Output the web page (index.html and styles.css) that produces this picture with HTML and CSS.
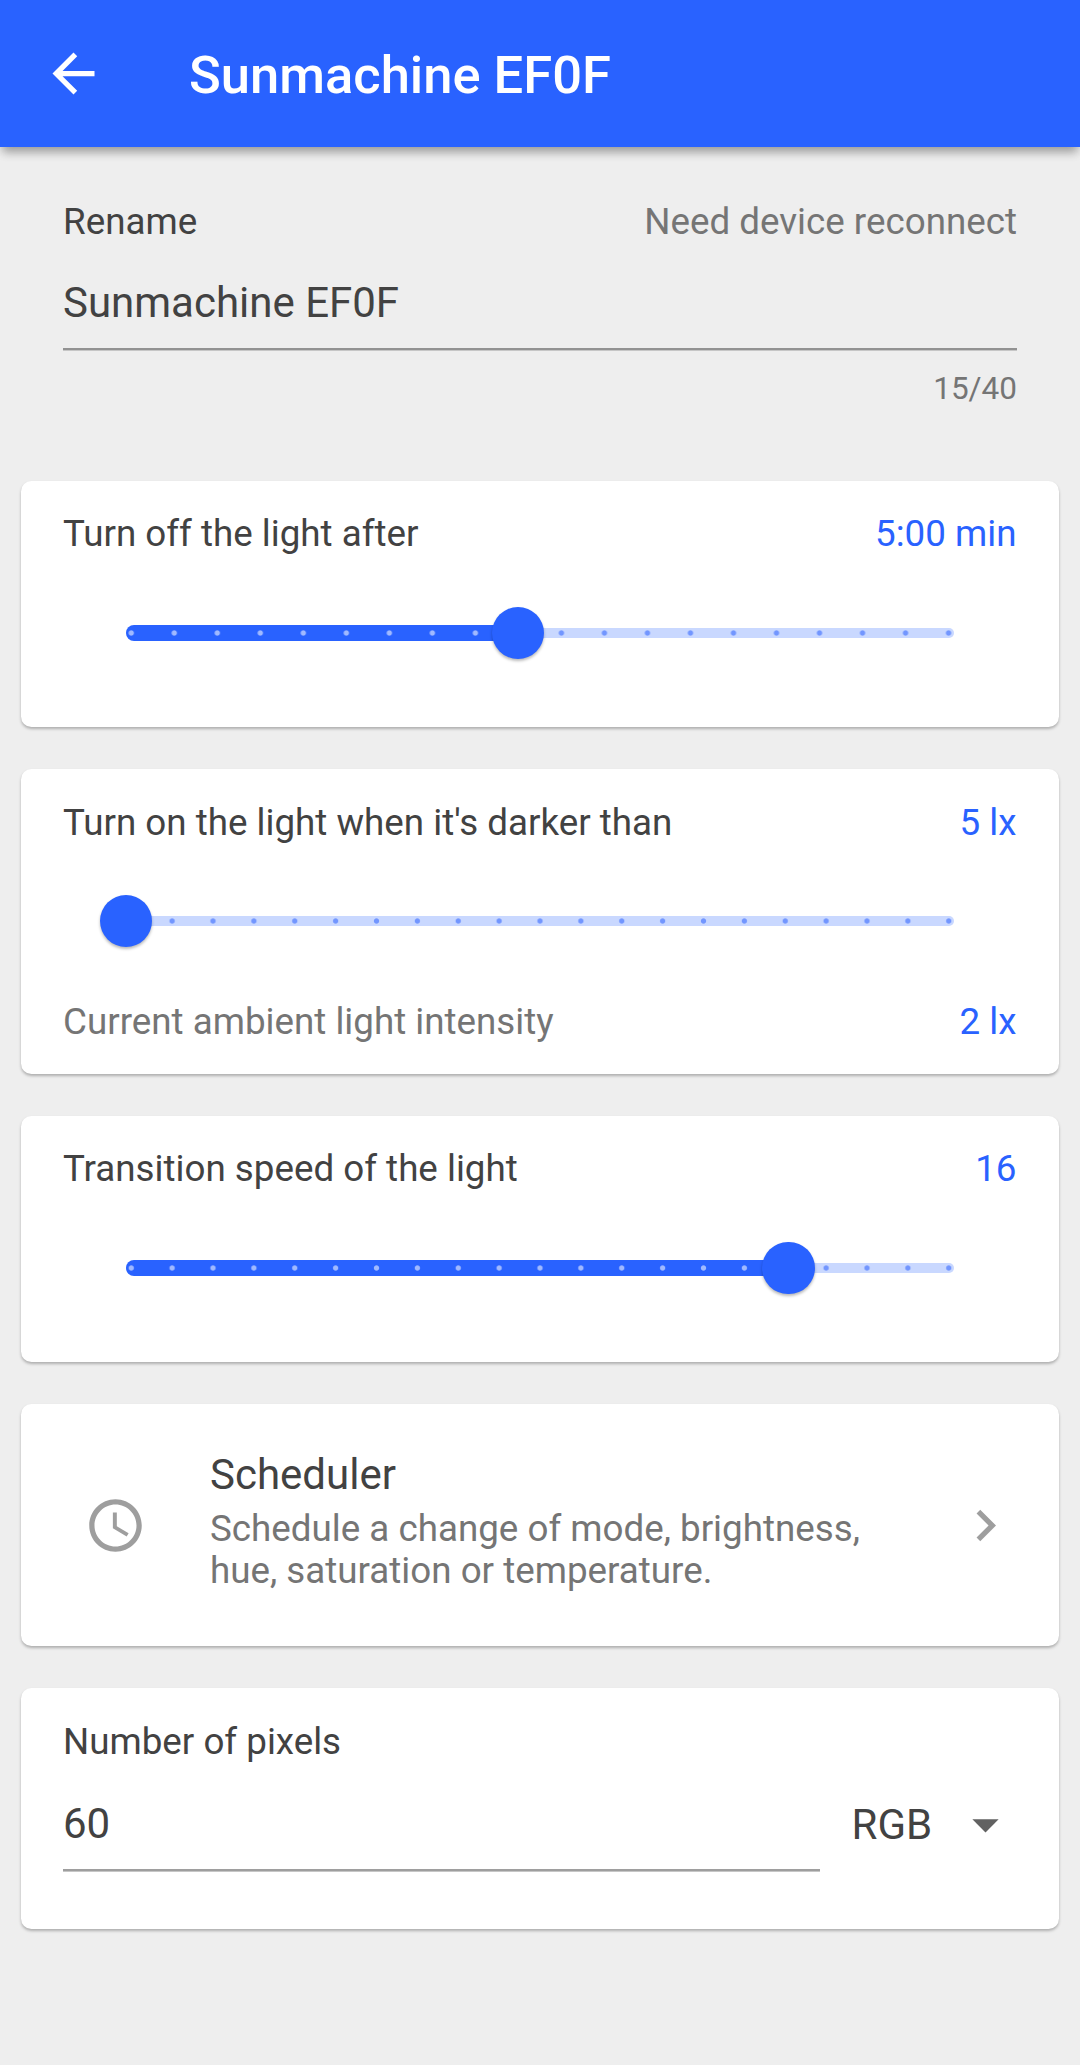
FILE: index.html
```html
<!DOCTYPE html>
<html lang="en">
<head>
<meta charset="utf-8">
<title>Sunmachine EF0F</title>
<link rel="stylesheet" href="styles.css">
</head>
<body>
<header class="app-bar">
  <svg class="icon" viewBox="0 0 24 24"><path fill="#fff" d="M20 11H7.83l5.59-5.59L12 4l-8 8 8 8 1.41-1.41L7.83 13H20v-2z"/></svg>
  <h1 class="title">Sunmachine EF0F</h1>
</header>
<main class="content">
  <section class="rename">
    <div class="row"><span>Rename</span><span class="muted">Need device reconnect</span></div>
    <div class="input">Sunmachine EF0F</div>
    <div class="counter">15/40</div>
  </section>

  <section class="card">
    <div class="row"><span>Turn off the light after</span><span class="value">5:00 min</span></div>
    <div class="slider" style="--divisions: 19; --value: 9">
      <div class="track"></div>
      <div class="fill"></div>
      <div class="thumb"></div>
    </div>
  </section>

  <section class="card card-ambient">
    <div class="row"><span>Turn on the light when it's darker than</span><span class="value">5 lx</span></div>
    <div class="slider" style="--divisions: 20; --value: 0">
      <div class="track"></div>
      <div class="thumb"></div>
    </div>
    <div class="row ambient"><span class="muted">Current ambient light intensity</span><span class="value">2 lx</span></div>
  </section>

  <section class="card">
    <div class="row"><span>Transition speed of the light</span><span class="value">16</span></div>
    <div class="slider" style="--divisions: 20; --value: 16">
      <div class="track"></div>
      <div class="fill"></div>
      <div class="thumb"></div>
    </div>
  </section>

  <section class="card card-link">
    <svg class="icon" viewBox="0 0 24 24"><path fill="#9e9e9e" d="M11.99 2C6.47 2 2 6.48 2 12s4.47 10 9.99 10C17.52 22 22 17.52 22 12S17.52 2 11.99 2zM12 20c-4.42 0-8-3.58-8-8s3.58-8 8-8 8 3.58 8 8-3.58 8-8 8zm.5-13H11v6l5.25 3.15.75-1.23-4.5-2.67z"/></svg>
    <div class="link-text">
      <div class="link-title">Scheduler</div>
      <div class="link-sub">Schedule a change of mode, brightness, hue, saturation or temperature.</div>
    </div>
    <svg class="icon" viewBox="0 0 24 24"><path fill="#9e9e9e" d="M10 6L8.59 7.41 13.17 12l-4.58 4.59L10 18l6-6z"/></svg>
  </section>

  <section class="card card-pixels">
    <div class="row"><span>Number of pixels</span></div>
    <div class="pixels">
      <div class="input">60</div>
      <div class="select"><span>RGB</span><svg class="icon" viewBox="0 0 24 24"><path fill="#616161" d="M7 10l5 5 5-5z"/></svg></div>
    </div>
  </section>
</main>
</body>
</html>
```
FILE: styles.css
```css
* { box-sizing: border-box; }

body {
  margin: 0;
  min-height: 2065px;
  background: #eee;
  color: #424242;
  font: 36.75px/43px Roboto, sans-serif;
}

.icon { display: block; flex: none; width: 63px; height: 63px; }

.app-bar {
  display: flex;
  align-items: center;
  gap: 84px;
  height: 147px;
  padding: 0 42px;
  background: #2962ff;
  box-shadow: 0 8px 9px -3px rgba(0, 0, 0, .28), 0 3px 12px rgba(0, 0, 0, .12);
}

.title {
  margin: 0;
  padding-top: 3px;
  color: #fff;
  font-size: 52.5px;
  font-weight: 500;
  line-height: 62px;
}

.content { display: flex; flex-direction: column; gap: 42px; padding: 0 21px; }

.rename { height: 291.5px; padding: 53px 42px 0; }

.row { display: flex; justify-content: space-between; }
.muted { color: #757575; }
.value { padding-right: .5px; color: #2962ff; }

.input {
  height: 72px;
  border-bottom: 2px solid #929292;
  box-shadow: 0 1px #c6c6c6;
  font-size: 42px;
  line-height: 49px;
}
.rename .input { margin-top: 35px; }

.counter {
  margin-top: 20px;
  color: #757575;
  font-size: 31.5px;
  line-height: 37px;
  text-align: right;
}

.card {
  height: 246.5px;
  padding: 31.5px 42px 0;
  border-radius: 10.5px;
  background: #fff;
  box-shadow: 0 2px 3px rgba(0, 0, 0, .27);
}
.card-ambient { height: 304.5px; }
.card-ambient .slider { margin-top: 14.5px; }
.ambient { margin-top: 15.5px; }

/* Sliders: the first and last ticks sit half a track height in from the ends */
.slider {
  --step: calc(817.5px / var(--divisions));
  --done: calc(100% * var(--value) / var(--divisions));
  position: relative;
  height: 126px;
  margin: 15px 63px 0;
}
.track, .fill {
  position: absolute;
  left: 0;
  background-repeat: repeat-x;
  background-position: calc(5.25px - var(--step) / 2) 0;
  background-size: var(--step) 100%;
}
.track {
  top: 57.5px;
  width: 100%;
  height: 10.5px;
  border-radius: 5.25px;
  background-color: #c9d8ff;
  background-image: radial-gradient(circle, #7296ff 2.2px, transparent 3.1px);
}
.fill {
  top: 55px;
  width: var(--done);
  height: 16px;
  border-radius: 8px 0 0 8px;
  background-color: #2962ff;
  background-image: radial-gradient(circle, #a0b9ff 2.2px, transparent 3.1px);
}
.thumb {
  position: absolute;
  top: 36.75px;
  left: calc(var(--done) - 26.25px);
  width: 52.5px;
  height: 52.5px;
  border-radius: 50%;
  background: #2962ff;
  box-shadow: 0 2px 3px rgba(0, 0, 0, .28);
}

.card-link {
  display: flex;
  align-items: center;
  height: 241.5px;
  padding: 1.5px 42px 0 63px;
}
.link-text { flex: 1; padding: 0 84px 8.5px 63px; }
.link-title { margin-bottom: 9px; font-size: 42px; line-height: 49px; }
.link-sub { color: #757575; line-height: 42px; }

.card-pixels { height: 241.5px; padding-top: 32px; }
.pixels { display: flex; gap: 31.5px; margin-top: 36.5px; }
.pixels .input { flex: 1; border-color: #9e9e9e; }
.select {
  display: flex;
  align-items: center;
  justify-content: space-between;
  width: 165.5px;
  height: 51px;
  font-size: 42px;
}
```
